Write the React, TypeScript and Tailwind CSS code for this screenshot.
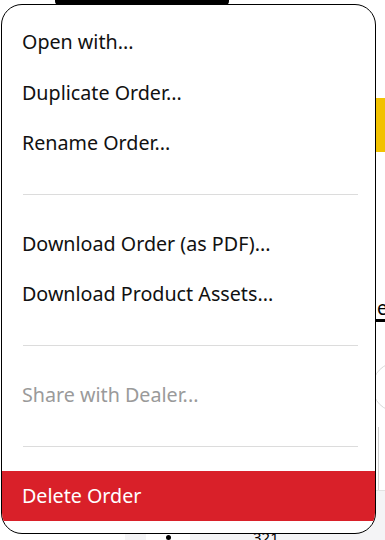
import React from "react";

const font = { fontFamily: '"Noto Sans", "Open Sans", sans-serif' };

function Item({ label, tone = "normal" }: { label: string; tone?: "normal" | "muted" | "danger" }) {
  const cls =
    tone === "danger"
      ? "bg-[#d92029] text-white"
      : tone === "muted"
      ? "text-[#9a9a9a]"
      : "text-[#111111]";
  return (
    <div className={`h-[50.4px] flex items-center pl-[20px] text-[19.7px] ${cls}`}>
      <span>{label}</span>
    </div>
  );
}

function Sep() {
  return (
    <div className="h-[50.4px] flex items-center pl-[21px] pr-[17px] pt-[2px]">
      <div className="h-px w-full bg-[#dcdcdc]" />
    </div>
  );
}

export default function App() {
  return (
    <div className="relative w-[385px] h-[540px] bg-white overflow-hidden flex flex-col" style={font}>
      {/* background page (mostly hidden under the menu) */}
      <div className="h-[5px] shrink-0 flex pl-[55px]">
        <div className="w-[174px] h-full bg-black rounded-b-[4px]" />
      </div>
      <div className="flex-1 flex">
        <div className="flex-1" />
        <div className="w-[9px] flex flex-col overflow-hidden">
          <div className="mt-[93px] h-[54px] bg-[#f2c200]" />
          <div className="mt-[145px] h-[22px] pl-px text-[19px] leading-[22px] text-black whitespace-nowrap">e</div>
          <div className="h-[3px] bg-black" />
          <div className="mt-[40px] ml-[-4px] w-[50px] h-[50px] shrink-0 rounded-full border border-[#d8d8d8]" />
          <div className="mt-[15px] ml-[2px] w-px flex-1 bg-[#d0d0d0]" />
        </div>
      </div>
      <div className="h-[50px] shrink-0 flex">
        <div className="w-[125px]" />
        <div className="flex-1 bg-[#f4f4f6] border-t border-[#e2e2e2] flex items-end pl-[21px] pb-0 gap-[63px]">
          <div className="w-[44px] h-[10px] bg-white flex justify-center items-end">
            <div className="w-[5px] h-[5px] rounded-full bg-black" />
          </div>
          <div className="text-[15px] leading-[18px] text-black underline mb-[-6px]">321</div>
        </div>
      </div>

      {/* context menu overlay */}
      <div className="absolute left-px top-[4px] w-[375px] h-[530px] bg-white border border-black rounded-[21px] overflow-hidden py-[12px]">
        <Item label="Open with..." />
        <Item label="Duplicate Order..." />
        <Item label="Rename Order..." />
        <Sep />
        <Item label="Download Order (as PDF)..." />
        <Item label="Download Product Assets..." />
        <Sep />
        <Item label="Share with Dealer..." tone="muted" />
        <Sep />
        <Item label="Delete Order" tone="danger" />
      </div>
    </div>
  );
}
